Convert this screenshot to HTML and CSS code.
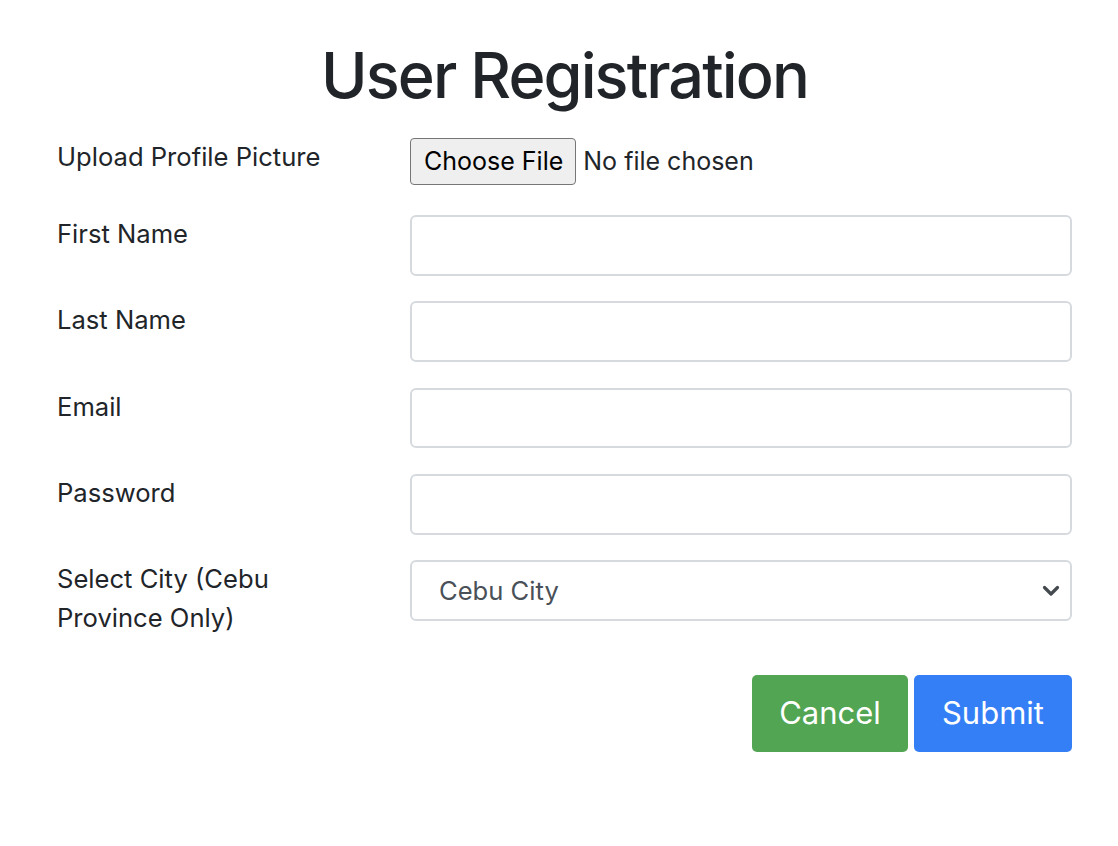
FILE: index.html
```html
<!DOCTYPE html>
<html lang="en">
<head>
<meta charset="utf-8">
<title>User Registration</title>
<link rel="stylesheet" href="styles.css">
</head>
<body>
<main class="page">
  <h1 class="title">User Registration</h1>
  <form class="reg-form">
    <div class="row row-file">
      <label class="row-label" for="pic">Upload Profile Picture</label>
      <div class="row-field">
        <input class="file-input" type="file" id="pic">
      </div>
    </div>
    <div class="row">
      <label class="row-label" for="fname">First Name</label>
      <div class="row-field"><input class="text-input" type="text" id="fname"></div>
    </div>
    <div class="row">
      <label class="row-label" for="lname">Last Name</label>
      <div class="row-field"><input class="text-input" type="text" id="lname"></div>
    </div>
    <div class="row">
      <label class="row-label" for="email">Email</label>
      <div class="row-field"><input class="text-input" type="email" id="email"></div>
    </div>
    <div class="row">
      <label class="row-label" for="pw">Password</label>
      <div class="row-field"><input class="text-input" type="password" id="pw"></div>
    </div>
    <div class="row">
      <label class="row-label" for="city">Select City (Cebu Province Only)</label>
      <div class="row-field">
        <select class="select-input" id="city">
          <option>Cebu City</option>
          <option>Mandaue City</option>
          <option>Lapu-Lapu City</option>
          <option>Talisay City</option>
        </select>
      </div>
    </div>
    <div class="actions">
      <button type="button" class="btn btn-cancel">Cancel</button>
      <button type="submit" class="btn btn-submit">Submit</button>
    </div>
  </form>
</main>
</body>
</html>
```

FILE: styles.css
```css
* {
  box-sizing: border-box;
}

html, body {
  margin: 0;
  padding: 0;
  background: #ffffff;
}

body {
  font-family: Inter, "Liberation Sans", Arial, sans-serif;
  font-size: 25.6px;
  line-height: 1.5;
  color: #212529;
}

.page {
  padding: 37px 46px 0 57px;
}

.title {
  margin: 0 0 24px 0;
  font-size: 63px;
  font-weight: 500;
  line-height: 1.22;
  text-align: center;
  letter-spacing: -1.9px;
}

.reg-form {
  display: flex;
  flex-direction: column;
}

.row {
  display: grid;
  grid-template-columns: 353px 1fr;
  align-items: start;
  margin-bottom: 25.6px;
}

.row-file {
  margin-bottom: 30px;
}

.row-label {
  display: block;
  line-height: 38.4px;
  padding-right: 48px;
}

.row-field {
  min-width: 0;
}

.file-input {
  font-family: Inter, "Liberation Sans", Arial, sans-serif;
  font-size: 25px;
  color: #212529;
  height: 47px;
  line-height: 47px;
}

.file-input::file-selector-button {
  font-family: Inter, "Liberation Sans", Arial, sans-serif;
  font-size: 25px;
  color: #000000;
  background: #efefef;
  border: 1.5px solid #767676;
  border-radius: 4px;
  height: 47px;
  padding: 0 12px 0 13px;
  margin: 0 7px 0 0;
  vertical-align: top;
}

.text-input,
.select-input {
  display: block;
  width: 100%;
  height: 60.8px;
  border: 2px solid #d6dade;
  border-radius: 6px;
  background-color: #ffffff;
  font-family: Inter, "Liberation Sans", Arial, sans-serif;
  font-size: 25.6px;
  color: #495057;
  padding: 0 19px;
  outline: none;
}

.select-input {
  appearance: none;
  -webkit-appearance: none;
  padding-left: 27px;
  background-image: url("data:image/svg+xml,%3Csvg xmlns='http://www.w3.org/2000/svg' viewBox='0 0 18 12'%3E%3Cpath d='M2.5 2.5 9 9l6.5-6.5' fill='none' stroke='%23454a50' stroke-width='3.2' stroke-linecap='round' stroke-linejoin='round'/%3E%3C/svg%3E");
  background-repeat: no-repeat;
  background-position: right 10px center;
  background-size: 18px 12px;
}

.actions {
  display: flex;
  justify-content: flex-end;
  gap: 6px;
  margin-top: 12px;
}

.btn {
  font-family: Inter, "Liberation Sans", Arial, sans-serif;
  font-size: 31px;
  line-height: 48px;
  height: 77px;
  padding: 0;
  border: none;
  border-radius: 5px;
  color: #ffffff;
  cursor: pointer;
}

.btn-cancel {
  background: #52a552;
  width: 156px;
}

.btn-submit {
  background: #347ff6;
  width: 158px;
}
```
